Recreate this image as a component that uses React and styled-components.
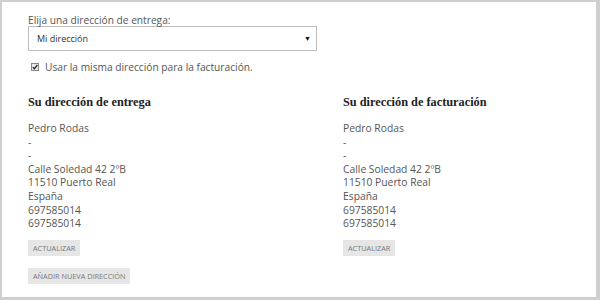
import React from "react";
import styled, { createGlobalStyle } from "styled-components";

const Global = createGlobalStyle`
  html, body { margin: 0; padding: 0; background: #fff; }
  body { font-family: "Open Sans", "Liberation Sans", sans-serif; }
`;

const Frame = styled.div`
  box-sizing: border-box;
  width: 600px;
  height: 300px;
  border-style: solid;
  border-color: #cfcfcf;
  border-width: 2px 4px 3px 2px;
  background: #fff;
  padding: 12px 0 0 26px;
  color: #555;
`;

const Label = styled.div`
  font-size: 10.2px;
  line-height: 12px;
  color: #555;
`;

const SelectBox = styled.div`
  box-sizing: border-box;
  width: 289px;
  height: 25px;
  border: 1px solid #bdbdbd;
  display: flex;
  align-items: center;
  justify-content: space-between;
  padding: 0 5px 0 8px;
  font-size: 9px;
  color: #333;
`;

const Arrow = styled.span`
  font-size: 7px;
  color: #111;
`;

const CheckRow = styled.label`
  display: flex;
  align-items: center;
  gap: 6px;
  height: 14px;
  margin-top: 9px;
  margin-left: 3px;
  font-size: 10.2px;
  color: #555;
`;

const Check = styled.span`
  box-sizing: border-box;
  width: 8px;
  height: 8px;
  border: 1px solid #888;
  background: #e8e8e8;
  display: flex;
  align-items: center;
  justify-content: center;
`;

const Columns = styled.div`
  display: grid;
  grid-template-columns: 315px 240px;
  margin-top: 20px;
`;

const Column = styled.div`
  display: flex;
  flex-direction: column;
  align-items: flex-start;
`;

const Heading = styled.h3`
  margin: 0;
  font-family: "Liberation Serif", serif;
  font-weight: bold;
  font-size: 12.3px;
  line-height: 16px;
  color: #222;
`;

const Address = styled.div`
  margin-top: 12px;
  font-size: 10.3px;
  line-height: 13.6px;
  color: #555;
`;

const Button = styled.button`
  box-sizing: border-box;
  font-family: "Open Sans", sans-serif;
  font-size: 7.3px;
  color: #777;
  background: #e6e6e6;
  border: none;
  height: 16px;
  padding: 0 5px;
  margin-top: ${(p) => p.$top || 0}px;
  text-transform: uppercase;
`;

const lines = ["Pedro Rodas", "-", "-", "Calle Soledad 42 2ºB", "11510 Puerto Real", "España", "697585014", "697585014"];

function AddressCol({ title, extra }) {
  return (
    <Column>
      <Heading>{title}</Heading>
      <Address>
        {lines.map((l, i) => (
          <div key={i}>{l}</div>
        ))}
      </Address>
      <Button $top={9}>Actualizar</Button>
      {extra}
    </Column>
  );
}

export default function App() {
  return (
    <>
      <Global />
      <Frame>
        <Label>Elija una dirección de entrega:</Label>
        <SelectBox>
          <span>Mi dirección</span>
          <Arrow>▼</Arrow>
        </SelectBox>
        <CheckRow>
          <Check>
            <svg width="6" height="6" viewBox="0 0 6 6">
              <path d="M0.8 3.2 L2.4 4.8 L5.3 1" stroke="#222" strokeWidth="1.3" fill="none" />
            </svg>
          </Check>
          Usar la misma dirección para la facturación.
        </CheckRow>
        <Columns>
          <AddressCol
            title="Su dirección de entrega"
            extra={<Button $top={12}>Añadir nueva dirección</Button>}
          />
          <AddressCol title="Su dirección de facturación" />
        </Columns>
      </Frame>
    </>
  );
}
